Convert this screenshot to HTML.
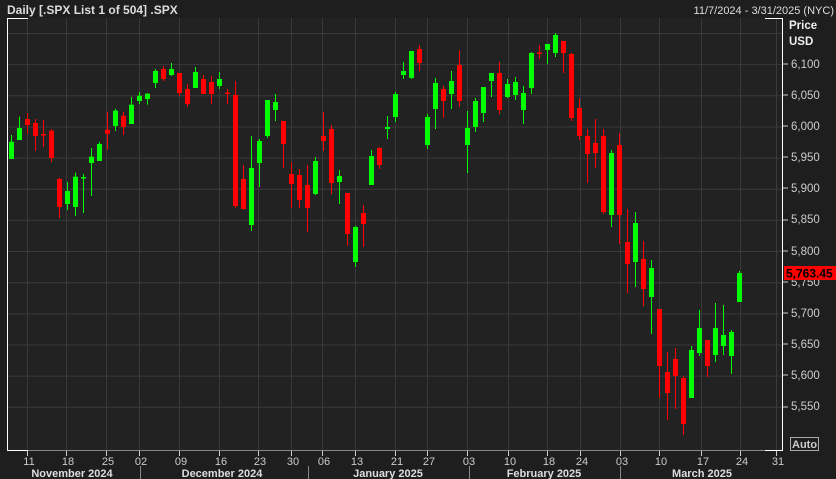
<!DOCTYPE html>
<html><head><meta charset="utf-8"><style>
html,body{margin:0;padding:0;background:#1e1e1e;width:836px;height:479px;overflow:hidden;font-family:"Liberation Sans",sans-serif;}
svg{position:absolute;left:0;top:0}
</style></head><body>
<svg id="s" width="836" height="479" xmlns="http://www.w3.org/2000/svg" font-family="Liberation Sans, sans-serif">
<rect x="0" y="0" width="836" height="479" fill="#1e1e1e"/>
<rect x="7" y="18" width="776" height="432" fill="#212221"/>
<g id="grid" stroke="#3a3a3a" stroke-width="1"></g>
<g id="c"></g>
<line x1="7.5" y1="18" x2="7.5" y2="451" stroke="#fff"/>
<line x1="782.5" y1="18" x2="782.5" y2="451" stroke="#fff"/>
<line x1="7" y1="450.5" x2="783" y2="450.5" stroke="#888"/>
<line x1="7" y1="18.5" x2="28" y2="18.5" stroke="#fff"/>
<line x1="765" y1="18.5" x2="783" y2="18.5" stroke="#fff"/>
<line x1="7" y1="450.5" x2="28" y2="450.5" stroke="#fff"/>
<line x1="765" y1="450.5" x2="783" y2="450.5" stroke="#fff"/>
<text x="7" y="14" fill="#ddd" font-size="12" font-weight="bold">Daily [.SPX List 1 of 504] .SPX</text>
<text x="834" y="14" fill="#ddd" font-size="11" text-anchor="end">11/7/2024 - 3/31/2025 (NYC)</text>
<text x="789" y="29" fill="#eee" font-size="11.5" font-weight="bold">Price</text>
<text x="789" y="45" fill="#eee" font-size="11.5" font-weight="bold">USD</text>
<g fill="#ccc" font-size="11.5">
<text x="791" y="68">6,100</text><text x="791" y="99">6,050</text><text x="791" y="130">6,000</text>
<text x="791" y="161">5,950</text><text x="791" y="192">5,900</text><text x="791" y="223">5,850</text>
<text x="791" y="255">5,800</text><text x="791" y="286">5,750</text><text x="791" y="317">5,700</text>
<text x="791" y="348">5,650</text><text x="791" y="379">5,600</text><text x="791" y="410">5,550</text>
</g>
<g stroke="#ccc"><line x1="783" y1="64" x2="788" y2="64"/><line x1="783" y1="95" x2="788" y2="95"/><line x1="783" y1="126" x2="788" y2="126"/><line x1="783" y1="157" x2="788" y2="157"/><line x1="783" y1="188" x2="788" y2="188"/><line x1="783" y1="220" x2="788" y2="220"/><line x1="783" y1="251" x2="788" y2="251"/><line x1="783" y1="282" x2="788" y2="282"/><line x1="783" y1="313" x2="788" y2="313"/><line x1="783" y1="344" x2="788" y2="344"/><line x1="783" y1="375" x2="788" y2="375"/><line x1="783" y1="407" x2="788" y2="407"/></g>
<rect x="784" y="266" width="52" height="14" fill="#ff0000"/>
<text x="786" y="277.5" fill="#000" font-size="12" font-weight="bold">5,763.45</text>
<rect x="790.5" y="437.5" width="28" height="13" fill="none" stroke="#aaa"/>
<text x="792" y="448" fill="#ccc" font-size="11" font-weight="bold">Auto</text>
<g id="xt" fill="#ccc" font-size="11" text-anchor="middle"></g>
<g fill="#ddd" font-size="11" font-weight="bold" text-anchor="middle">
<text x="72" y="477">November 2024</text><text x="222" y="477">December 2024</text>
<text x="388" y="477">January 2025</text><text x="544" y="477">February 2025</text>
<text x="702" y="477">March 2025</text>
</g>
<g stroke="#888"><line x1="140.5" y1="466" x2="140.5" y2="479"/><line x1="308.5" y1="466" x2="308.5" y2="479"/><line x1="469.5" y1="466" x2="469.5" y2="479"/><line x1="620.5" y1="466" x2="620.5" y2="479"/></g>
</svg>
<script>
var NS="http://www.w3.org/2000/svg";
function el(p,t,a){var e=document.createElementNS(NS,t);for(var k in a)e.setAttribute(k,a[k]);p.appendChild(e);return e;}
var g=document.getElementById("grid");
var xs=[[29,"11"],[68,"18"],[108,"25"],[141,"02"],[181,"09"],[221,"16"],[260,"23"],[293,"30"],[324,"06"],[357,"13"],[397,"21"],[429,"27"],[469,"03"],[510,"10"],[549,"18"],[582,"24"],[622,"03"],[661,"10"],[703,"17"],[742,"24"],[778,"31"]];
var xt=document.getElementById("xt");
xs.forEach(function(a){var x=a[0]-1.5;el(g,"line",{x1:x,y1:18,x2:x,y2:450});el(xt,"line",{x1:x,y1:451,x2:x,y2:456,stroke:"#ccc"});var t=el(xt,"text",{x:a[0],y:465});t.textContent=a[1];});
for(var i=0;i<13;i++){var y=33.5+31.15*i;el(g,"line",{x1:7,y1:y,x2:783,y2:y});}
var D=[
"g",141.7,159,135,159,"g",128,140,116.7,140,"r",119,125,113,134,"r",123,136,119,151,"r",134,135,120,147,"r",130.7,158,129,162,
"r",179,207,178,218,"g",191,204,182,210,"g",176.7,207,172.7,216,"g",177,178.5,174,213,"g",156.7,163,148,196,"g",144,161,142,161,
"r",129.7,133.7,111.7,150,"g",110.7,126,108.7,131,"r",115.7,127,111.7,135,"g",104.7,124,97,124,"g",95.7,101,92,104,"g",93.7,99,93,104.7,
"g",71,83,69,88,"r",69,79,66,81,"g",69,75,63,76,"r",73,93,73,96,"r",89,104,84,107,"g",72,88,67,88,
"r",79,94,75,94,"r",82,94,76,104,"g",79,86,72,89,"r",92.5,94,89,104,"r",95,206,81,208,"r",179,209,165,210,
"g",168,225,136,231,"g",141,163,139,187,"g",100,136,100,138,"g",102,110,94,121,"r",121,144,121,168,"r",174,184,162,208,
"r",175,200,169,208,"r",185,208,165,232,"g",161,194,157,195,"r",136,141,112,151,"r",129,183,125,194,"g",176,182,170,204,
"r",193,234,193,246,"g",227,262,226,267,"r",213,224,205,247,"g",156,185,150,185,"r",148,165,147,169,"g",127,129,116,139,
"g",94,117,92,122,"g",71,75,62,79,"g",51,78,51,79,"r",49,63,45,71,"g",117,145,114,149,"g",83,109,78,129,
"r",89,101,86,118,"g",81,94,71,109,"r",65,101,50,107,"g",128,145,111,173,"g",101,127,98,132,"g",87,113,87,122,
"g",73,81,73,97,"r",73,110,62,114,"g",84,97,79,98,"g",82,95,77,100,"g",93,110,86,124,"g",53,88,52,94,
"r",52.5,54,45,59,"g",44,50,44,64,"g",35,53,33,57,"r",41,53,41,73,"r",54,118,53,121,"r",108,136,98,140,
"r",136,154,129,183,"r",143,153,119,168,"r",136,212,129,214,"g",153,215,150,227,"r",145,215,133,244,"r",242,264,209,293,
"g",223,262,212,287,"r",259,289,241,306,"g",268,297,260,334,"r",309,366,309,398,"r",372,393,352,420,"r",359,376,348,409,
"r",378,424,376,435,"g",350,398,346,398,"g",328,353,310,356,"r",340,366,340,377,"g",328,355,303,362,"g",335,346,305,355,
"g",332,356,330,374,"g",273,302,271,302];
var c=document.getElementById("c");
for(var i=0;i<D.length/5;i++){var k=i*5,col=D[k]=="g"?"#00ff00":"#ff0000",x=11.3+8*i;
el(c,"rect",{x:Math.round(x),y:D[k+3],width:1,height:Math.max(1,D[k+4]-D[k+3]),fill:col});
el(c,"rect",{x:Math.round(x)-2,y:D[k+1],width:5,height:Math.max(1.5,D[k+2]-D[k+1]),fill:col});}
</script>
</body></html>
